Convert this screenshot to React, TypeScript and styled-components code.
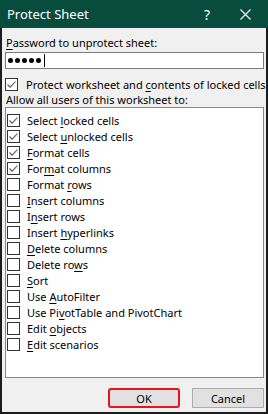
import React from "react";
import styled, { createGlobalStyle } from "styled-components";

const Global = createGlobalStyle`
  html, body { margin: 0; padding: 0; background: #f0f0f0; }
  * { box-sizing: border-box; }
`;

const FONT = `"Noto Sans", "Open Sans", Arial, sans-serif`;

const Window = styled.div`
  width: 268px;
  height: 414px;
  display: flex;
  flex-direction: column;
  background: #f0f0f0;
  font-family: ${FONT};
  font-size: 11px;
  color: #000;
  overflow: hidden;
`;

const TitleBar = styled.div`
  height: 28px;
  flex: none;
  background: #084c3d;
  color: #fff;
  display: flex;
  align-items: center;
  padding-left: 7px;
`;

const Title = styled.div`
  flex: 1;
  font-size: 13px;
`;

const TitleButton = styled.div<{ $w: number }>`
  width: ${(p) => p.$w}px;
  height: 28px;
  display: flex;
  align-items: center;
  justify-content: center;
  font-size: 14px;
`;

const Body = styled.div`
  flex: 1;
  display: flex;
  flex-direction: column;
  border: 2px solid #1c1c1c;
  border-top: none;
  padding: 7px 2px 0 3px;
`;

const Label = styled.div<{ $h?: number }>`
  height: ${(p) => p.$h ?? 16}px;
  line-height: 16px;
  padding-left: 1px;
  white-space: nowrap;
`;

const Key = styled.span`
  text-decoration: underline;
  text-underline-offset: 2px;
`;

const PasswordBox = styled.div`
  margin-top: 1px;
  height: 17px;
  width: 259px;
  background: #fff;
  border: 1px solid #7a7a7a;
  display: flex;
  align-items: center;
  padding-left: 2px;
  gap: 2px;
`;

const Dot = styled.span`
  width: 5px;
  height: 5px;
  border-radius: 50%;
  background: #000;
`;

const Caret = styled.span`
  width: 1px;
  height: 13px;
  background: #000;
  margin-left: 1px;
`;

const Row = styled.div<{ $inList?: boolean }>`
  height: 16px;
  display: flex;
  align-items: center;
  white-space: nowrap;
  gap: ${(p) => (p.$inList ? 7 : 8)}px;
  padding-left: ${(p) => (p.$inList ? 1 : 0)}px;
  margin-top: ${(p) => (p.$inList ? 0 : 7)}px;
`;

const Box = styled.span`
  width: 13px;
  height: 13px;
  flex: none;
  border: 1px solid #333;
  background: #fff;
  display: flex;
  align-items: center;
  justify-content: center;
`;

const List = styled.div`
  width: 259px;
  height: 271px;
  flex: none;
  background: #fff;
  border: 1px solid #828790;
  padding-top: 4px;
  display: flex;
  flex-direction: column;
`;

const Buttons = styled.div`
  display: flex;
  justify-content: flex-end;
  gap: 12px;
  margin-top: 10px;
`;

const Button = styled.div<{ $focus?: boolean }>`
  width: 72px;
  height: 20px;
  background: #e1e1e1;
  border: ${(p) => (p.$focus ? "2px solid #e8141c" : "1px solid #adadad")};
  border-radius: ${(p) => (p.$focus ? "3px" : "0")};
  display: flex;
  align-items: center;
  justify-content: center;
  font-size: 11px;
`;

const Check = () => (
  <svg width="11" height="11" viewBox="0 0 11 11">
    <path d="M1.5 5.5 L4.2 8.2 L9.5 2.5" fill="none" stroke="#555" strokeWidth="1.1" />
  </svg>
);

type Item = { pre: string; key: string; post: string; checked: boolean };

const items: Item[] = [
  { pre: "Select ", key: "l", post: "ocked cells", checked: true },
  { pre: "Select ", key: "u", post: "nlocked cells", checked: true },
  { pre: "", key: "F", post: "ormat cells", checked: true },
  { pre: "For", key: "m", post: "at columns", checked: true },
  { pre: "Format ", key: "r", post: "ows", checked: false },
  { pre: "", key: "I", post: "nsert columns", checked: false },
  { pre: "I", key: "n", post: "sert rows", checked: false },
  { pre: "Insert ", key: "h", post: "yperlinks", checked: false },
  { pre: "", key: "D", post: "elete columns", checked: false },
  { pre: "Delete ro", key: "w", post: "s", checked: false },
  { pre: "", key: "S", post: "ort", checked: false },
  { pre: "Use ", key: "A", post: "utoFilter", checked: false },
  { pre: "Use Pi", key: "v", post: "otTable and PivotChart", checked: false },
  { pre: "Edit ", key: "o", post: "bjects", checked: false },
  { pre: "", key: "E", post: "dit scenarios", checked: false },
];

export default function App() {
  return (
    <>
      <Global />
      <Window>
        <TitleBar>
          <Title>Protect Sheet</Title>
          <TitleButton $w={30}>?</TitleButton>
          <TitleButton $w={46}>
            <svg width="11" height="11" viewBox="0 0 11 11">
              <path d="M0.5 0.5 L10.5 10.5 M10.5 0.5 L0.5 10.5" stroke="#fff" strokeWidth="1.1" />
            </svg>
          </TitleButton>
        </TitleBar>
        <Body>
          <Label>
            <Key>P</Key>assword to unprotect sheet:
          </Label>
          <PasswordBox>
            <Dot />
            <Dot />
            <Dot />
            <Dot />
            <Dot />
            <Caret />
          </PasswordBox>
          <Row>
            <Box>
              <Check />
            </Box>
            <span>
              Protect worksheet and <Key>c</Key>ontents of locked cells
            </span>
          </Row>
          <Label $h={15}>Allow all users of this worksheet to:</Label>
          <List>
            {items.map((it, i) => (
              <Row $inList key={i}>
                <Box>{it.checked && <Check />}</Box>
                <span>
                  {it.pre}
                  <Key>{it.key}</Key>
                  {it.post}
                </span>
              </Row>
            ))}
          </List>
          <Buttons>
            <Button $focus>OK</Button>
            <Button>Cancel</Button>
          </Buttons>
        </Body>
      </Window>
    </>
  );
}
